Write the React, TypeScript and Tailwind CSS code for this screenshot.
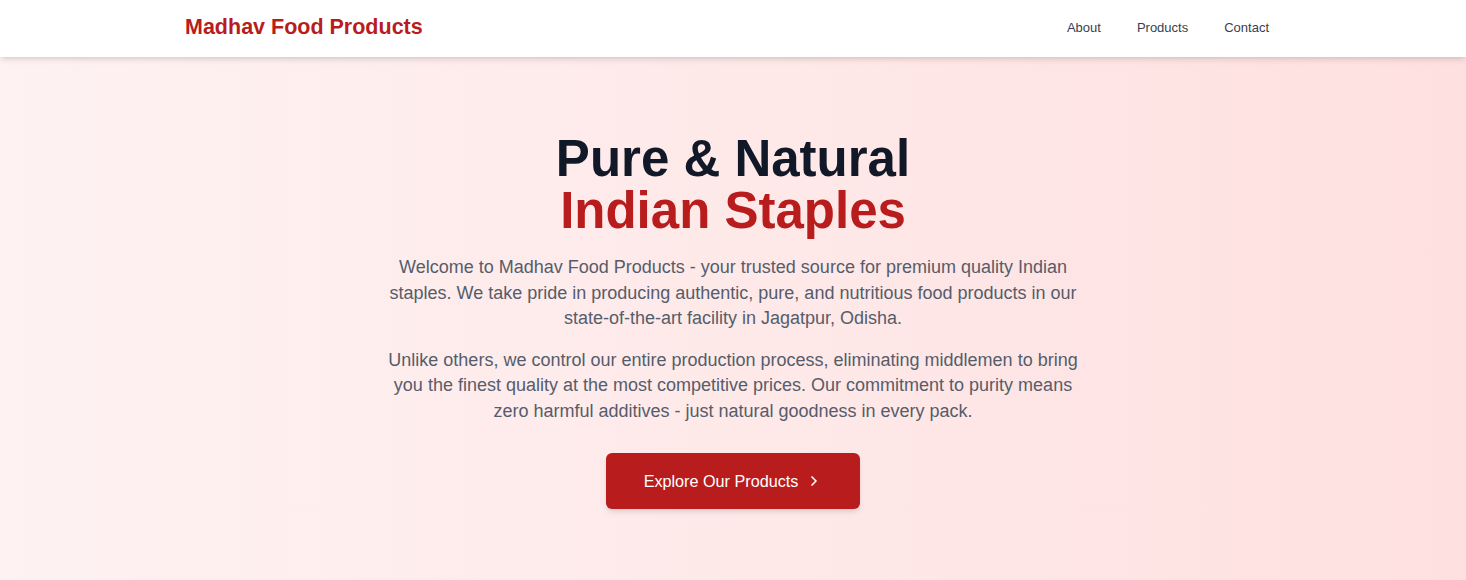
import { ChevronRight } from "lucide-react";

const links = ["About", "Products", "Contact"];

export default function App() {
    return (
        <div className="min-h-screen font-['Liberation_Sans',Arial,sans-serif]">
            <header className="relative z-10 bg-white shadow-md">
                <div className="mx-auto max-w-6xl px-7 h-[57px] pb-[2px] flex items-center justify-between">
                    <a href="#" className="text-[21.5px] font-bold text-[#b91c1c]">
                        Madhav Food Products
                    </a>
                    <nav className="flex items-center gap-3 pt-[1px]">
                        {links.map((link) => (
                            <a key={link} href="#" className="px-3 text-[13px] text-[#374151]">
                                {link}
                            </a>
                        ))}
                    </nav>
                </div>
            </header>

            <section className="bg-gradient-to-r from-[#fef2f2] to-[#fee0e0] h-[523px]">
                <div className="mx-auto max-w-[704px] pt-[76px] text-center">
                    <h1 className="text-[51px] leading-[52px] font-bold text-[#111827] mb-[18px]">
                        Pure &amp; Natural
                        <span className="block text-[#b91c1c]">Indian Staples</span>
                    </h1>
                    <p className="text-lg leading-[25.5px] text-[#555d6b] mb-4">
                        Welcome to Madhav Food Products - your trusted source for premium quality Indian
                        staples. We take pride in producing authentic, pure, and nutritious food products in
                        our state-of-the-art facility in Jagatpur, Odisha.
                    </p>
                    <p className="text-lg leading-[25.5px] text-[#555d6b]">
                        Unlike others, we control our entire production process, eliminating middlemen to
                        bring you the finest quality at the most competitive prices. Our commitment to purity
                        means zero harmful additives - just natural goodness in every pack.
                    </p>
                    <a
                        href="#"
                        className="mt-[29px] inline-flex items-center gap-2 rounded-md bg-[#b91c1c] px-[38px] py-4 text-white shadow-md"
                    >
                        <span className="text-[16.2px] leading-6">Explore Our Products</span>
                        <ChevronRight className="h-4 w-4" strokeWidth={2.5} />
                    </a>
                </div>
            </section>
        </div>
    );
}
